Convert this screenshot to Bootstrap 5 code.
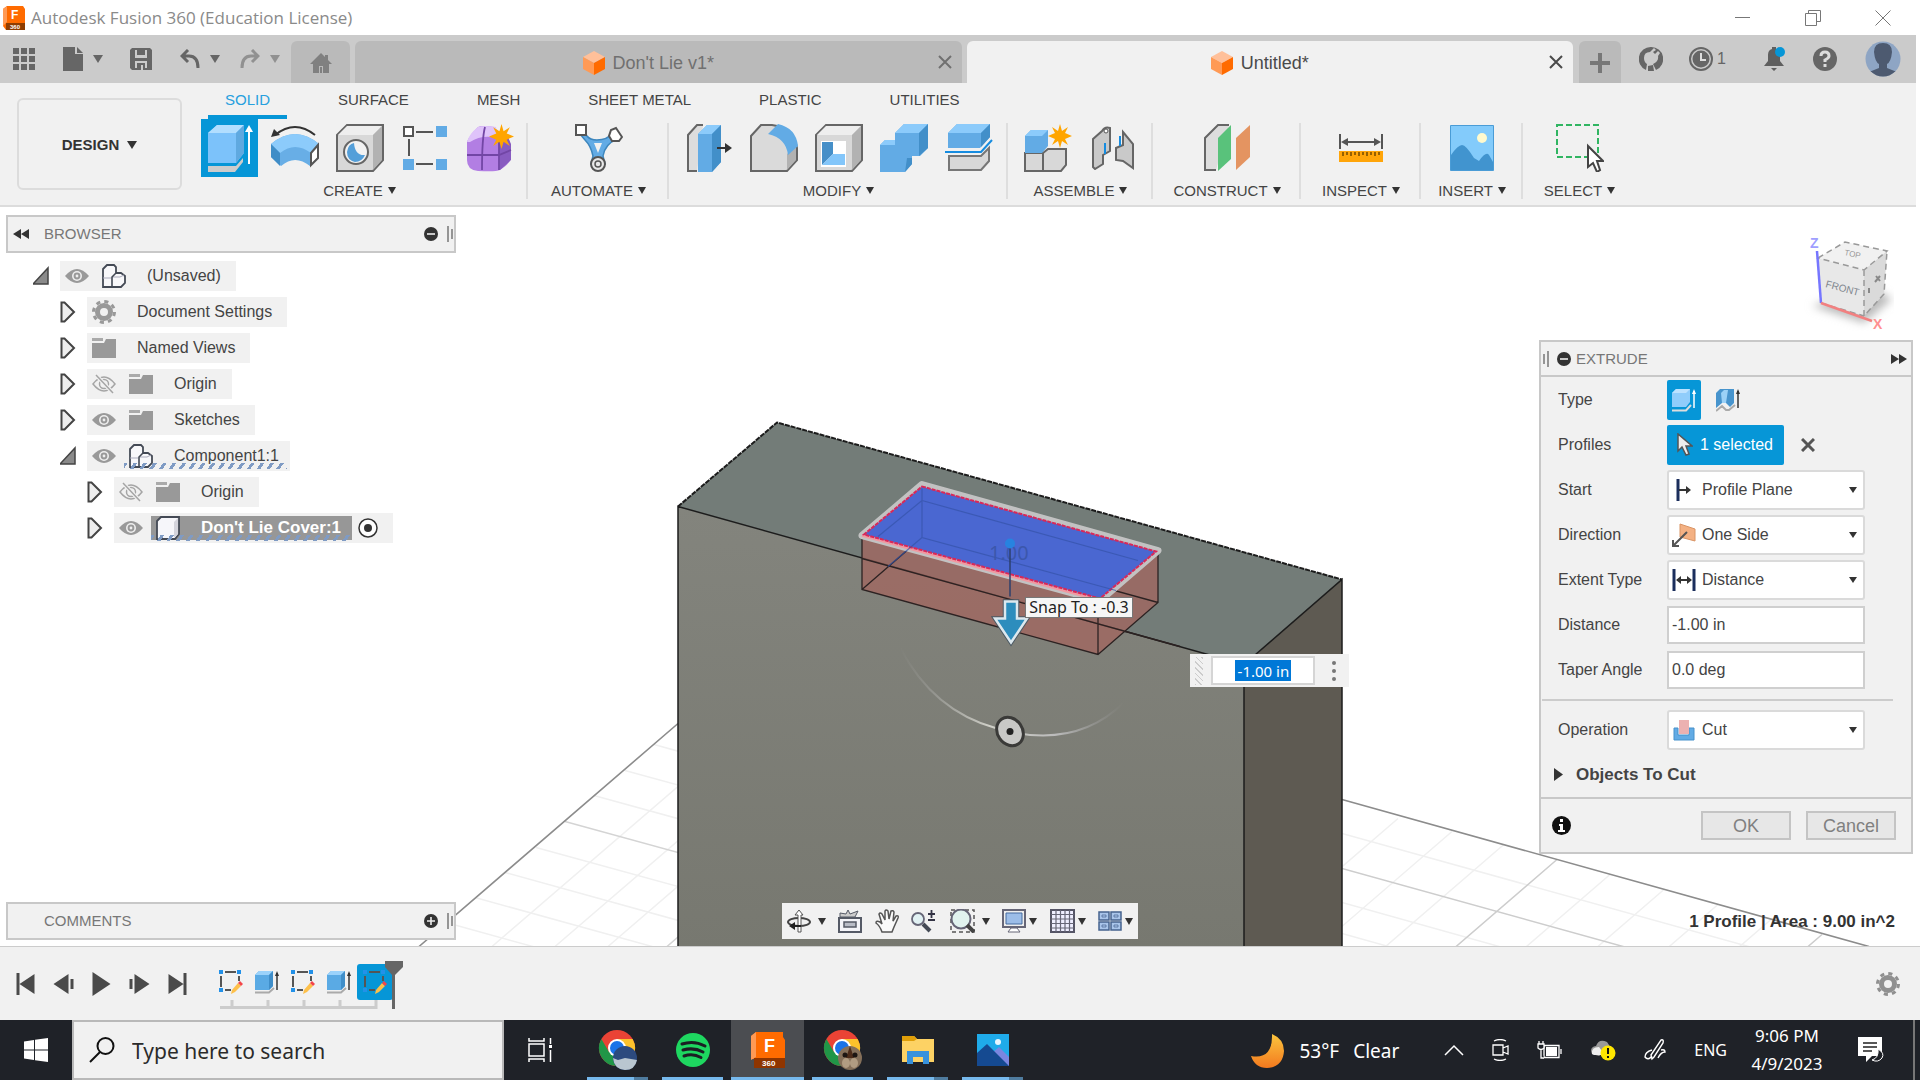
<!DOCTYPE html>
<html lang="en">
<head>
<meta charset="utf-8">
<meta name="viewport" content="width=device-width, initial-scale=1">
<title>Autodesk Fusion 360 (Education License)</title>
<link href="https://cdn.jsdelivr.net/npm/bootstrap@5.3.0/dist/css/bootstrap.min.css" rel="stylesheet">
<style>
  :root { --bar:#f1f1f1; --strip:#cbcbcb; --tabidle:#bababa; --accent:#0696d7; --ink:#444; --line:#c8c8c8; }
  html, body { height: 100%; }
  body { font-family: "Liberation Sans", Arial, sans-serif; font-size: 16px; line-height: 20px; color: var(--ink); background: #fff; overflow: hidden; }
  button { font: inherit; color: inherit; background: none; border: 0; padding: 0; }
  svg { display: block; flex: none; }
  .ui-face { font-family: "Noto Sans", sans-serif; }
  .caret { flex: none; width: 0; height: 0; border: 5px solid transparent; border-top: 8px solid currentColor; border-bottom: 0; }

  .titlebar { height: 35px; padding-left: 3px; color: #8a8a8a; }
  .titlebar .app-name { font-family: "Open Sans", sans-serif; font-size: 17px; margin-left: 6px; }
  .win-controls { gap: 54px; padding-right: 29px; }

  .tabstrip { height: 48px; background: var(--strip); color: #666; }
  .quick { width: 291px; }
  .quick button { height: 48px; gap: 10px; }
  .q-grid { width: 48px; padding-left: 13px; }
  .quick .q-file { width: 70px; padding-left: 15px; }
  .quick .q-save { width: 48px; padding-left: 12px; }
  .quick .q-undo { width: 62px; padding-left: 14px; }
  .quick .q-redo { width: 63px; padding-left: 12px; color: #919191; }
  .quick .q-grid { padding-left: 13px; }
  .doc-tab { height: 42px; background: var(--tabidle); border-radius: 6px 6px 0 0; font-size: 18px; color: #707070; padding-top: 2px; }
  .doc-tab.is-active { background: var(--bar); color: #4a4a4a; }
  .file-tab { padding-right: 20px; }
  .home-tab, .file-tab:not(.is-active) { margin-right: 5px; }
  .home-tab { width: 59px; }
  .add-tab { width: 42px; }
  .account { padding-left: 6px; width: 343px; }
  .doc-tab .close-x { position: absolute; right: 10px; top: 14px; }

  .ribbon { min-height: 123px; background: var(--bar); border-bottom: 2px solid #dcdcdc; }
  .workspace { width: 165px; height: 92px; margin: 15px 9px 0 17px; border: 2px solid #dcdcdc; border-radius: 6px; font-weight: 700; font-size: 15px; color: #333; padding-top: 2px; }
  .ribbon-tabs { height: 36px; font-size: 15px; }
  .ribbon-tabs a { padding: 7px 34px; color: var(--ink); text-decoration: none; position: relative; white-space: nowrap; }
  .ribbon-tabs a.is-active { color: #27a0de; }
  .ribbon-tabs a.is-active::after { content: ""; position: absolute; left: 17px; right: 17px; bottom: 0; height: 4px; background: var(--accent); }
  .tool-group { position: relative; color: #333; }
  .tool-group:not(:last-child)::after { content: ""; position: absolute; right: 0; top: 4px; bottom: 6px; width: 2px; background: #dedede; }
  .tools { height: 57px; gap: 8px; }
  .tools button { width: 57px; height: 58px; display: flex; align-items: center; justify-content: center; }
  .tools .is-on { background: var(--accent); }
  .group-label { height: 29px; font-size: 15px; gap: 5px; color: #444; }
  .group-label .caret { border-width: 7px 4px 0; color: #333; }
  .g-create { width: 337px; } .g-automate { width: 141px; } .g-modify { width: 339px; } .g-assemble { width: 145px; }
  .g-construct { width: 148px; } .g-inspect { width: 120px; } .g-insert { width: 102px; } .g-select { width: 113px; }

  .viewport { position: relative; background: #fff; overflow: hidden; }
  .scene { position: absolute; inset: 0; width: 100%; height: 100%; }
  .float { position: absolute; }
  .palette-head { width: 450px; height: 38px; border: 2px solid var(--line); background: var(--bar); color: #777; font-size: 15px; }
  .browser { left: 6px; top: 8px; }
  .comments { left: 6px; bottom: 6px; padding-left: 36px; }
  .tree { padding-top: 8px; }
  .tree-row { height: 30px; margin-bottom: 6px; }
  .tree-row > button { width: 17px; margin-right: 10px; }
  .chip { height: 30px; background: var(--bar); padding: 0 15px 0 5px; }
  .lv1 { padding-left: 27px; } .lv2 { padding-left: 54px; } .lv3 { padding-left: 81px; }
  .chip .eye { margin-right: 13px; }
  .chip .node { margin-right: 21px; }
  .hatch { position: relative; margin: 0 -12px 0 -5px; padding: 0 8px 0 5px; height: 24px; }
  .hatch::after { content: ""; position: absolute; left: 0; right: 0; bottom: -1px; height: 6px; background: repeating-linear-gradient(125deg, #7f9bc4 0 3px, transparent 3px 8px); }
  .hatch.is-selected { background: #979797; color: #fff; font-weight: 700; font-size: 17px; margin-right: 6px; padding-right: 11px; }

  .view-cube { right: 26px; top: 24px; }
  .snap { left: 1026px; left: 53.4%; top: 390px; border: 1px solid #777; background: #f6f6f6; color: #222; height: 21px; line-height: 19px; padding: 0 3px; font-size: 16px; white-space: nowrap; }
  .mini { left: 62%; top: 447px; height: 33px; width: 159px; background: var(--bar); padding-left: 5px; }
  .mini input { width: 104px; height: 29px; border: 2px solid #d5d5d5; padding: 2px 22px; border-radius: 0; font-family: "Noto Sans", sans-serif; font-size: 15px; line-height: 20px; color: #fff; background: linear-gradient(#0078d7,#0078d7) content-box, #fff; text-align: center; }
  .mini button { margin-left: 17px; }
  .grip { width: 8px; height: 28px; background: repeating-linear-gradient(45deg, #ccc 0 1px, transparent 1px 4px); margin-right: 8px; }

  .extrude { right: 7px; top: 133px; width: 374px; background: var(--bar); border: 2px solid var(--line); }
  .extrude header { height: 35px; border-bottom: 2px solid var(--line); color: #777; padding: 0 4px 0 2px; font-size: 15px; }
  .extrude header .minus { margin: 0 5px 0 8px; }
  .field-row { height: 45px; padding-left: 17px; }
  .field-row > label, .field-row > .field-name { width: 109px; }
  .pick { position: relative; width: 198px; }
  .pick svg { position: absolute; left: 5px; top: 8px; pointer-events: none; }
  .pick::after { content: ""; position: absolute; right: 8px; top: 17px; border: 4px solid transparent; border-top: 6px solid #333; border-bottom: 0; pointer-events: none; }
  .pick select { appearance: none; width: 100%; height: 40px; border: 2px solid #dadada; border-radius: 3px; background: #fff; color: var(--ink); padding: 0 24px 0 33px; }
  .field-row .form-control { width: 198px; height: 38px; border: 2px solid #cfcfcf; border-radius: 0; background: #fff; color: var(--ink); padding: 0 3px; font-size: 16px; }
  .on-btn { background: var(--accent); color: #fff; border-radius: 2px; height: 40px; }
  .type-btn { width: 34px; margin-right: 15px; }
  .sel-btn { width: 117px; padding-left: 10px; gap: 7px; }
  .clear-btn { margin-left: 17px; color: #555; }
  .rule { height: 2px; background: #ccc; margin: 7px 18px 6px 1px; }
  .objects-row { padding-left: 13px; gap: 13px; font-weight: 700; font-size: 17px; }
  .extrude footer { border-top: 2px solid var(--line); height: 55px; padding: 0 15px 0 11px; }
  .dlg-btn { width: 90px; height: 29px; border: 2px solid #c4c4c4; background: #e7e7e7; color: #808080; font-size: 18px; line-height: 22px; }
  .status { right: 25px; bottom: 14px; font-weight: 700; font-size: 17px; color: #333; }

  .navbar-strip { left: 50%; transform: translateX(-50%); bottom: 7px; width: 356px; height: 36px; background: var(--bar); padding: 0 5px; color: #333; gap: 6px; justify-content: space-between; }
  .navbar-strip button { display: flex; align-items: center; gap: 3px; }
  .navbar-strip .wide { gap: 7px; }
  .navbar-strip .caret { border-width: 7px 4px 0; }

  .timeline { height: 74px; background: var(--bar); border-top: 1px solid #ccc; color: #4a4a4a; }
  .playback { gap: 15px; margin-left: 14px; width: 199px; }
  .features { position: relative; padding-top: 17px; }
  .features button { width: 36px; height: 36px; display: flex; align-items: center; justify-content: center; }
  .features .is-on { background: var(--accent); border-radius: 3px; }
  .marker { position: absolute; left: 171px; top: 14px; }
  .gear-btn { margin-right: 20px; color: #909090; }

  .taskbar { height: 60px; background: #1f2228; color: #fff; }
  .start { width: 72px; }
  .search { width: 432px; height: 60px; background: #f1f1f1; border: 2px solid #b9b9b9; padding-left: 15px; color: #222; }
  .search input { border: 0; background: none; font-family: "Noto Sans", sans-serif; font-size: 21px; line-height: 30px; outline: 0; width: 330px; padding: 2px 0 0; margin-left: 17px; }
  .search input::placeholder { color: #2b2b2b; opacity: 1; }
  .apps button { width: 75px; height: 60px; display: flex; align-items: center; justify-content: center; position: relative; }
  .apps .running::after { content: ""; position: absolute; left: 7px; right: 7px; bottom: 0; height: 3px; background: #76b9ed; }
  .apps .many::after { background: linear-gradient(90deg, #76b9ed 47px, #4f7c9f 47px); }
  .apps .is-front::before { content: ""; position: absolute; inset: 0 1px; background: #4b4d51; }
  .apps .is-front::after { left: 1px; right: 1px; }
  .apps svg { position: relative; }
  .apps .task-view { width: 72px; margin-right: 4px; }
  .weather { font-size: 19px; gap: 14px; padding-top: 2px; margin-right: 45px; }
  .tray { gap: 28px; }
  .clock { line-height: 28px; font-size: 17px; width: 84px; margin-left: 18px; }
  .action { margin: 0 29px; }
  .peek { width: 7px; height: 60px; border-left: 2px solid #777; }
</style>
</head>
<body class="d-flex flex-column">

<svg width="0" height="0" class="position-absolute" aria-hidden="true">
  <defs>
    <symbol id="eye" viewBox="0 0 24 24"><path d="M0 12Q12-2 24 12Q12 26 0 12Z" fill="#999"/><circle cx="12" cy="12" r="5" fill="#eee"/><circle cx="12" cy="12" r="3.4" fill="#999"/><circle cx="12" cy="12" r="1.4" fill="#eee"/></symbol>
    <symbol id="eye-off" viewBox="0 0 24 24"><g fill="none" stroke="#a5a5a5" stroke-width="1.5"><path d="M1 12Q12-2 23 12Q12 26 1 12Z"/><circle cx="12" cy="12" r="4.5"/><path d="M4 3L21 21" stroke="#f1f1f1" stroke-width="4"/><path d="M4 3L21 21"/></g></symbol>
    <symbol id="folder" viewBox="0 0 24 24"><path d="M0 7H12L14 3H24V22H0Z" fill="#999"/><path d="M0 2H11V5H0Z" fill="#aaa"/></symbol>
    <symbol id="tri-closed" viewBox="0 0 17 22"><path d="M1.5 1.5H4.500L14 11L4.500 20.500H1.500Z" fill="#eee" stroke="#444" stroke-width="2"/></symbol>
    <symbol id="tri-open" viewBox="0 0 17 22"><path d="M15 3V19H0Z" fill="#8a8a8a" stroke="#444" stroke-width="1.500"/></symbol>
    <symbol id="component" viewBox="0 0 24 24"><path d="M1 5L5 1H12L14 3V9H19L23 12V19L19 23H1Z" fill="#f8f8fa" stroke="#444a55" stroke-width="1.800"/><path d="M1 14H9M10 13H18L22 11" stroke="#aab" fill="none"/><path d="M10 23V13L14 9" stroke="#444a55" stroke-width="1.600" fill="none"/></symbol>
    <symbol id="orange-cube" viewBox="0 0 22 24"><path d="M11 0L22 6L11 12L0 6Z" fill="#ffc09a"/><path d="M0 6L11 12V24L0 18Z" fill="#ff9a55"/><path d="M22 6L11 12V24L22 18Z" fill="#ff6b00"/></symbol>
    <symbol id="x" viewBox="0 0 14 14"><path d="M1 1L13 13M13 1L1 13" stroke="currentColor" stroke-width="2" fill="none"/></symbol>
    <symbol id="minus-dot" viewBox="0 0 14 14"><circle cx="7" cy="7" r="7" fill="#333"/><path d="M3 7H11" stroke="#eee" stroke-width="1.600"/></symbol>
    <symbol id="extrude-s" viewBox="0 0 24 24"><path d="M0 5L4 1H18V16L14 20H0Z" fill="#5aaae4"/><path d="M0 5L4 1H18L14 5Z" fill="#9ad2fb"/><path d="M14 5L18 1V16L14 20Z" fill="#3f8ec9"/><path d="M0 22.500H14L19 18" fill="none" stroke="#aaa" stroke-width="2"/><path d="M22 20V3" stroke="#333" stroke-width="1.500"/><path d="M20 6L22 1L24 6Z" fill="#333"/></symbol>
    <symbol id="sketch-s" viewBox="0 0 24 24"><path d="M6 2H17M2 6V17M20 6V11M6 20H12" stroke="#555" stroke-width="2" fill="none"/><path d="M0 0h4v4H0zM18 0h4v4h-4zM0 18h4v4H0z" fill="#2391e8"/><path d="M13 20L19 13L22 16L16 22L12 24Z" fill="#fdc04a"/><path d="M19 13L21 11L24 14L22 16Z" fill="#f3454a"/></symbol>
    <symbol id="star" viewBox="0 0 24 24"><path d="M12 0L14 7L20 3L17 9L24 12L17 15L20 21L14 17L12 24L10 17L4 21L7 15L0 12L7 9L4 3L10 7Z" fill="#ffa500"/></symbol>
    <symbol id="gear" viewBox="0 0 24 24"><g fill="none" stroke="currentColor"><circle cx="12" cy="12" r="6.500" stroke-width="5"/><circle cx="12" cy="12" r="10.500" stroke-width="3" stroke-dasharray="4.120 4.120"/></g></symbol>
    <symbol id="chrome" viewBox="0 0 40 40"><circle cx="19" cy="18" r="18" fill="#ea4335"/><path d="M3.400 9A18 18 0 0 0 19 36L27 22.500L11 22Z" fill="#209647"/><path d="M19 9H34.600A18 18 0 0 1 19 36L27 22Z" fill="#fcc22c"/><circle cx="19" cy="18" r="9" fill="#fff"/><circle cx="19" cy="18" r="7" fill="#1a73e8"/></symbol>
    <symbol id="play-step" viewBox="0 0 22 24"><path d="M1 7H4V17H1ZM6 2L21 12L6 22Z" fill="currentColor"/></symbol>
    <symbol id="skip-end" viewBox="0 0 22 24"><path d="M2 2L17 12L2 22ZM17 1H20V23H17Z" fill="currentColor"/></symbol>
  </defs>
</svg>

<header class="titlebar d-flex align-items-center">
  <svg width="22" height="24" viewBox="0 0 22 24"><path d="M0 3L4 0H20L22 3V24H3L0 20Z" fill="#ff6b00"/><path d="M0 3L4 0V16L0 20Z" fill="#ff9a55"/><path d="M3 17H22V24H3Z" fill="#8f3d00"/><text x="8" y="13" font-size="12" font-weight="700" fill="#fff">F</text><text x="7" y="23" font-size="6" font-weight="700" fill="#fff">360</text></svg>
  <span class="app-name flex-grow-1">Autodesk Fusion 360 (Education License)</span>
  <div class="win-controls d-flex align-items-center">
    <button aria-label="Minimize"><svg width="16" height="16" viewBox="0 0 16 16"><path d="M0 7.500H15" stroke="#777"/></svg></button>
    <button aria-label="Restore"><svg width="16" height="16" viewBox="0 0 16 16" fill="none" stroke="#777"><path d="M.5 3.500H11.500V15.500H.5ZM3.500 3.500V.5H15.500V11.500H11.500"/></svg></button>
    <button aria-label="Close"><svg width="16" height="16" viewBox="0 0 16 16"><path d="M.5.5L15.500 15.500M15.500.5L.5 15.500" stroke="#777"/></svg></button>
  </div>
</header>

<nav class="tabstrip d-flex align-items-end me-1" aria-label="Documents">
  <div class="quick d-flex">
    <button class="q-grid d-flex align-items-center" aria-label="Data panel"><svg width="22" height="22" viewBox="0 0 22 22" fill="currentColor"><path d="M0 0h6v6H0zM8 0h6v6H8zM16 0h6v6h-6zM0 8h6v6H0zM8 8h6v6H8zM16 8h6v6h-6zM0 16h6v6H0zM8 16h6v6H8zM16 16h6v6h-6z"/></svg></button>
    <button class="q-file d-flex align-items-center" aria-label="File"><svg width="20" height="24" viewBox="0 0 20 24" fill="currentColor"><path d="M0 0H12V7H20V24H0Z"/><path d="M14 0L20 6H14Z"/></svg><i class="caret"></i></button>
    <button class="q-save d-flex align-items-center" aria-label="Save"><svg width="22" height="22" viewBox="0 0 22 22"><path d="M2 0H20L22 2V22H2L0 20V2Z" fill="currentColor"/><path d="M5 2H17V10H5Z" fill="#cbcbcb"/><path d="M7 0H15V7H7Z" fill="currentColor"/><path d="M5 13H17V20H5Z" fill="#cbcbcb"/><path d="M7 15H15V22H7Z" fill="currentColor"/><path d="M11 17h2v5h-2z" fill="#cbcbcb"/></svg></button>
    <button class="q-undo d-flex align-items-center" aria-label="Undo"><svg width="20" height="20" viewBox="0 0 20 20" fill="none" stroke="currentColor" stroke-width="3"><path d="M8 1L2 7L8 13M2 7H9Q18 7 18 19"/></svg><i class="caret"></i></button>
    <button class="q-redo d-flex align-items-center" aria-label="Redo"><svg width="20" height="20" viewBox="0 0 20 20" fill="none" stroke="currentColor" stroke-width="3"><path d="M12 1L18 7L12 13M18 7H11Q2 7 2 19"/></svg><i class="caret"></i></button>
  </div>
  <button class="doc-tab home-tab d-flex align-items-center justify-content-center" aria-label="Home"><svg width="22" height="20" viewBox="0 0 22 20" fill="#808080"><path d="M11 0L15 4V2H18V7L22 11H19V20H13V13H9V20H3V11H0Z"/><path d="M10 14h2v6h-2z"/></svg></button>
  <button class="doc-tab file-tab position-relative d-flex align-items-center justify-content-center flex-grow-1 w-25"><svg width="22" height="24" class="me-2"><use href="#orange-cube"/></svg>Don't Lie v1*<svg class="close-x" width="14" height="14"><use href="#x"/></svg></button>
  <button class="doc-tab file-tab is-active position-relative d-flex align-items-center justify-content-center flex-grow-1 w-25"><svg width="22" height="24" class="me-2"><use href="#orange-cube"/></svg>Untitled*<svg class="close-x" width="14" height="14"><use href="#x"/></svg></button>
  <div class="account d-flex align-items-end flex-shrink-0">
    <button class="doc-tab add-tab d-flex align-items-center justify-content-center" aria-label="New tab"><svg width="20" height="20" viewBox="0 0 20 20"><path d="M10 0V20M0 10H20" stroke="#777" stroke-width="4"/></svg></button>
    <div class="d-flex align-items-center" style="height:48px;padding-left:18px">
      <button aria-label="Extensions"><svg width="24" height="24" viewBox="0 0 24 24"><path d="M12 0A12 12 0 0 1 17 23L14 17Q20 14 19 9L21 6L19 4L16 7L14 5L17 3L15 1L11 5Q5 5 5 11Q5 15 8 17L7 23A12 12 0 0 1 12 0Z" fill="#666"/><path d="M9 19L14 18L15 24H9Z" fill="#666"/></svg></button>
      <button class="d-flex align-items-center gap-1" style="margin-left:26px"><svg width="24" height="24" viewBox="0 0 24 24"><circle cx="12" cy="12" r="11" fill="none" stroke="#666" stroke-width="2"/><circle cx="12" cy="12" r="8.500" fill="#666"/><path d="M12 6V13H17" stroke="#ddd" stroke-width="2" fill="none"/></svg>1</button>
      <button style="margin-left:37px" aria-label="Notifications"><svg width="24" height="26" viewBox="0 0 24 26"><path d="M1 20L5 15V9Q5 4 9 3V1H13V3Q17 4 17 9V15L21 20ZM8 22H14L11 25Z" fill="#5f5f5f"/><circle cx="17" cy="6" r="5" fill="#0696d7"/></svg></button>
      <button style="margin-left:26px" aria-label="Help"><svg width="24" height="24" viewBox="0 0 24 24"><circle cx="12" cy="12" r="12" fill="#666"/><path d="M8 9Q8 5 12 5Q16 5 16 9Q16 11 12 13V15" stroke="#ddd" stroke-width="3" fill="none"/><path d="M10.500 17h3v3h-3z" fill="#ddd"/></svg></button>
      <button style="margin-left:28px" aria-label="Profile"><svg width="36" height="36" viewBox="0 0 36 36"><defs><clipPath id="av"><circle cx="18" cy="18" r="17.500"/></clipPath></defs><g clip-path="url(#av)"><path d="M0 0H36V36H0Z" fill="#8ea5c4"/><path d="M18 2Q27 2 27 11Q26 21 22 23V27L32 31L36 36H0L4 31L14 27V23Q10 21 9 11Q9 2 18 2Z" fill="#4d5a70"/></g></svg></button>
    </div>
  </div>
</nav>

<section class="ribbon d-flex me-1">
  <button class="workspace d-flex align-items-center justify-content-center gap-2 flex-shrink-0">DESIGN<i class="caret"></i></button>
  <div>
    <nav class="ribbon-tabs d-flex" aria-label="Workspace tabs">
      <a href="#" class="is-active">SOLID</a><a href="#">SURFACE</a><a href="#">MESH</a><a href="#">SHEET METAL</a><a href="#">PLASTIC</a><a href="#">UTILITIES</a>
    </nav>
    <div class="d-flex">
      <div class="tool-group g-create">
        <div class="tools d-flex justify-content-center">
          <button class="is-on" aria-label="Extrude"><svg width="48" height="48" viewBox="0 0 48 48"><path d="M2 9L11 1H38V29L30 39H2Z" fill="#7cc2fa"/><path d="M2 9L11 1H38L30 9Z" fill="#b1deff"/><path d="M30 9L38 1V29L30 39Z" fill="#5fa9e0"/><path d="M2 42H30L37 34V38L29 48H2Z" fill="#ccc"/><path d="M43 40V5" stroke="#fff" stroke-width="2"/><path d="M39 8L43 1L47 8Z" fill="#fff"/></svg></button>
          <button aria-label="Revolve"><svg width="48" height="48" viewBox="0 0 48 48"><path d="M0 20Q24 0 48 20L40 29L39 42Q24 30 10 42L0 33Z" fill="#68aee6"/><path d="M0 20Q24 0 48 20L40 29Q24 17 9 29Z" fill="#8ccbfb"/><path d="M0 20L9 29V42L0 33Z" fill="#3f8dc7"/><path d="M40 29L47 21V34L40 41Z" fill="#fff" stroke="#555" stroke-width="2"/><path d="M4 11Q24-5 44 11" fill="none" stroke="#333" stroke-width="2"/><path d="M0 13L3 5L9 11Z" fill="#333"/></svg></button>
          <button aria-label="Hole"><svg width="48" height="48" viewBox="0 0 48 48"><path d="M1 11L11 1H47V36L37 47H1Z" fill="#d8d8d8" stroke="#666" stroke-width="2"/><path d="M2 11L11 2H46L37 11Z" fill="#eee"/><path d="M37 11L46 2V36L37 46Z" fill="#b2b2b2"/><circle cx="20" cy="28" r="12" fill="#f2f2f2" stroke="#666" stroke-width="2"/><path d="M18 19Q19 32 29 31Q26 38 19 38Q11 36 11 28Q12 20 18 19Z" fill="#549fd9"/></svg></button>
          <button aria-label="Pattern"><svg width="44" height="44" viewBox="0 0 44 44"><path d="M13 6H30M6 13V30M13 38H30" stroke="#555" stroke-width="2"/><path d="M1 1H10V10H1Z" fill="#fff" stroke="#555" stroke-width="2"/><path d="M33 0h11v11H33zM0 33h11v11H0zM33 33h11v11H33z" fill="#62abe5"/></svg></button>
          <button aria-label="Create form"><svg width="48" height="48" viewBox="0 0 48 48"><path d="M1 18Q3 12 12 3Q16 1 28 3L44 20V36Q43 40 34 46Q30 48 12 47Q1 46 1 36Z" fill="#b27ee3"/><path d="M1 18Q3 10 12 3Q18 1 30 3L32 14Q16 10 4 18Z" fill="#dfc3fa"/><path d="M33 14Q40 6 45 20V36L34 46Z" fill="#885bc0"/><path d="M19 3Q16 14 16 46M1 31H33L45 26M33 14V46" stroke="#7246a5" stroke-width="1.800" fill="none"/><use href="#star" x="23" y="0" width="25" height="25"/></svg></button>
        </div>
        <div class="group-label d-flex align-items-center justify-content-center">CREATE<i class="caret"></i></div>
      </div>
      <div class="tool-group g-automate">
        <div class="tools d-flex justify-content-center"><button aria-label="Automate"><svg width="48" height="48" viewBox="0 0 48 48"><path d="M8 6L12 12Q15 16 22 16Q32 16 38 9L42 15Q30 20 28 32L30 40H16L18 32Q16 22 10 16L5 10Z" fill="#62abe5" stroke="#3d86bd" stroke-width="1.500"/><path d="M19 19H27L23 29Z" fill="#f1f1f1"/><path d="M1 1H11V11H1Z" fill="#fff" stroke="#555" stroke-width="2"/><path d="M41 4L47 13L44 17L37 17L34 12L36 6Z" fill="#fff" stroke="#555" stroke-width="2"/><circle cx="23" cy="40" r="7" fill="#e8e8e8" stroke="#555" stroke-width="2"/><circle cx="23" cy="40" r="3" fill="none" stroke="#555" stroke-width="1.500"/></svg></button></div>
        <div class="group-label d-flex align-items-center justify-content-center">AUTOMATE<i class="caret"></i></div>
      </div>
      <div class="tool-group g-modify">
        <div class="tools d-flex justify-content-center">
          <button aria-label="Press pull"><svg width="48" height="48" viewBox="0 0 48 48"><path d="M12 47H3V11L12 1H18" fill="#ddd" stroke="#666" stroke-width="2"/><path d="M13 10L22 1H36V38L27 48H13Z" fill="#62abe5"/><path d="M13 10L22 1H36L27 10Z" fill="#8ccbfb"/><path d="M27 10L36 1V38L27 48Z" fill="#428fc9"/><path d="M32 24H42" stroke="#333" stroke-width="2"/><path d="M40 19L47 24L40 29Z" fill="#333"/></svg></button>
          <button aria-label="Fillet"><svg width="48" height="48" viewBox="0 0 48 48"><path d="M1 47V12L11 1H22Q44 4 47 24V36L37 47Z" fill="#dadada" stroke="#666" stroke-width="2"/><path d="M37 30L46 22V36L37 46Z" fill="#b2b2b2"/><path d="M18 10L28 0Q46 4 48 22L38 31Q36 14 18 10Z" fill="#62abe5"/></svg></button>
          <button aria-label="Shell"><svg width="48" height="48" viewBox="0 0 48 48"><path d="M1 11L11 1H47V36L37 47H1Z" fill="#d8d8d8" stroke="#666" stroke-width="2"/><path d="M2 11L11 2H46L37 11Z" fill="#eee"/><path d="M37 11L46 2V36L37 46Z" fill="#b2b2b2"/><path d="M6 17H31V43H6Z" fill="#fff"/><path d="M7 18H18V30L7 41Z" fill="#468fc8"/><path d="M18 30H30V41H7Z" fill="#83c6fa"/></svg></button>
          <button aria-label="Combine"><svg width="48" height="48" viewBox="0 0 48 48"><path d="M0 21L5 16H15V9L24 0H48V24L40 32H32V40L25 48H0Z" fill="#62abe5"/><path d="M15 9L24 0H48L39 9ZM0 21L5 16H15V21Z" fill="#8ccbfb"/><path d="M39 9L48 0V24L39 32ZM27 34H32V40L25 48Z" fill="#428fc9"/></svg></button>
          <button aria-label="Split body"><svg width="48" height="48" viewBox="0 0 48 48"><path d="M3 9L12 0H45V13L35 24H3Z" fill="#62abe5"/><path d="M3 9L12 0H45L36 9Z" fill="#8ccbfb"/><path d="M36 9L45 0V13L36 23Z" fill="#428fc9"/><path d="M0 28H36L47 16" stroke="#168ce0" stroke-width="2" fill="none"/><path d="M4 32H36L44 24V37L36 46H4Z" fill="#d8d8d8" stroke="#777" stroke-width="2"/></svg></button>
        </div>
        <div class="group-label d-flex align-items-center justify-content-center">MODIFY<i class="caret"></i></div>
      </div>
      <div class="tool-group g-assemble">
        <div class="tools d-flex justify-content-center">
          <button aria-label="New component"><svg width="48" height="48" viewBox="0 0 48 48"><path d="M1 29H19V47H1ZM19 29L24 25H42V41L37 47H19Z" fill="#d8d8d8" stroke="#666" stroke-width="2"/><path d="M1 12L7 6H24V22L18 29H1Z" fill="#62abe5"/><path d="M1 12L7 6H24L18 12Z" fill="#8ccbfb"/><use href="#star" x="24" y="0" width="24" height="24"/></svg></button>
          <button aria-label="Joint"><svg width="44" height="44" viewBox="0 0 44 44"><g fill="#c9c9c9" stroke="#666" stroke-width="2"><path d="M2 13L11 5Q14 0 19 2V25L12 29V38L4 43L2 41Z"/><path d="M32 6L42 18V42L32 35L25 34V22L32 19Z"/></g><circle cx="15" cy="5" r="2" fill="#fff" stroke="#555"/><path d="M14 17V28M29 10V20" stroke="#168ce0" stroke-width="2"/></svg></button>
        </div>
        <div class="group-label d-flex align-items-center justify-content-center">ASSEMBLE<i class="caret"></i></div>
      </div>
      <div class="tool-group g-construct">
        <div class="tools d-flex justify-content-center"><button aria-label="Offset plane"><svg width="48" height="48" viewBox="0 0 48 48"><path d="M13 46H2V14L15 1H26" fill="#ddd" stroke="#666" stroke-width="2"/><path d="M15 14L28 1V35L15 47Z" fill="#59c27b"/><path d="M33 14L47 1V33L33 46Z" fill="#e49461"/></svg></button></div>
        <div class="group-label d-flex align-items-center justify-content-center">CONSTRUCT<i class="caret"></i></div>
      </div>
      <div class="tool-group g-inspect">
        <div class="tools d-flex justify-content-center"><button aria-label="Measure"><svg width="44" height="28" viewBox="0 0 44 28"><path d="M1 0V15M43 0V15M4 8H40" stroke="#555" stroke-width="2"/><path d="M2 8L9 4V12ZM42 8L35 4V12Z" fill="#555"/><path d="M0 17H44V28H0Z" fill="#ffa50a"/><path d="M4 18v4M8 18v3M12 18v4M16 18v3M20 18v4M24 18v3M28 18v4M32 18v3M36 18v4M40 18v3" stroke="#734a00" stroke-width="1.500"/></svg></button></div>
        <div class="group-label d-flex align-items-center justify-content-center">INSPECT<i class="caret"></i></div>
      </div>
      <div class="tool-group g-insert">
        <div class="tools d-flex justify-content-center"><button aria-label="Insert"><svg width="44" height="46" viewBox="0 0 44 46"><path d="M.5.5H43.500V45.500H.5Z" fill="#83cbfb" stroke="#4a9cd6"/><path d="M1 30Q8 20 12 20Q16 20 24 33L29 36Q36 26 39 30L43 37V45H1Z" fill="#4194cf"/><circle cx="32" cy="13" r="5" fill="#ffface"/></svg></button></div>
        <div class="group-label d-flex align-items-center justify-content-center">INSERT<i class="caret"></i></div>
      </div>
      <div class="tool-group g-select">
        <div class="tools d-flex justify-content-center"><button aria-label="Select"><svg width="48" height="48" viewBox="0 0 48 48"><path d="M1 1H42V33H1Z" fill="none" stroke="#30b562" stroke-width="2" stroke-dasharray="6 3"/><path d="M32 22V43L37 39L41 48L44 46L41 37H47Z" fill="#fff" stroke="#444" stroke-width="2"/></svg></button></div>
        <div class="group-label d-flex align-items-center justify-content-center">SELECT<i class="caret"></i></div>
      </div>
    </div>
  </div>
</section>

<main class="viewport flex-grow-1">
  <svg class="scene" viewBox="0 206 1920 740" preserveAspectRatio="xMidYMid slice" aria-hidden="true">
    <defs>
      <linearGradient id="front" x2="0" y2="1"><stop stop-color="#83847d"/><stop offset="1" stop-color="#777870"/></linearGradient>
      <clipPath id="gl"><path d="M678 723V946H419Z"/></clipPath>
      <clipPath id="gr"><path d="M1342 799V946H1869Z"/></clipPath>
      <linearGradient id="arc"><stop stop-color="#aaa" stop-opacity="0"/><stop offset=".4" stop-color="#d0d0c8"/><stop offset=".7" stop-color="#bbb"/><stop offset="1" stop-color="#999" stop-opacity="0"/></linearGradient>
    </defs>
    <g clip-path="url(#gl)" fill="none" stroke="#f0f0f0" stroke-width="1.500">
      <path d="M654 744l200 55M625 770l200 55M594 795l200 55M536 847l200 55M505 872l300 83M475 897l300 83M446 922l300 83"/>
      <path d="M492 946l300-258M555 946l300-258M608 946l300-258"/>
      <path d="M565 821l200 55M667 946l80-69" stroke="#d4d4d4"/>
    </g>
    <g clip-path="url(#gr)" fill="none" stroke="#f0f0f0" stroke-width="1.500">
      <path d="M1342 833l500 139M1342 902l300 84M1342 933l300 84"/>
      <path d="M1398 818l-160 138M1452 831l-160 138M1505 843l-160 138M1610 874l-160 138M1664 889l-160 138M1718 904l-160 138M1771 919l-160 138"/>
      <path d="M1342 868l400 111M1557 859l-160 138M1822 934l-80 69" stroke="#cdcdcd"/>
    </g>
    <path d="M678 723L419 946M1342 799L1869 946" stroke="#8c8c8c" stroke-width="1.600" fill="none"/>
    <path d="M678 506L1244 664V950H678Z" fill="url(#front)"/>
    <path d="M678 506L777 422L1342 579L1244 664Z" fill="#737c78"/>
    <path d="M1244 664L1342 579V950H1244Z" fill="#5e5a52"/>
    <path d="M678 950V506L1244 664V950M1244 664L1342 579V950" fill="none" stroke="#1c1c1c" stroke-width="1.500"/>
    <path d="M678 506L777 422L1342 579" fill="none" stroke="#1c1c1c" stroke-width="2" stroke-dasharray="5 1"/>
    <path d="M862 536L1098 602L1158 551V602L1098 654L862 589Z" fill="#a3665f" fill-opacity=".75"/>
    <path d="M862 536V589L1098 654L1158 602V551M1098 602V654M862 558L1180 646M862 589L922 537L1158 602" fill="none" stroke="#2c2222" stroke-width="1.300"/>
    <path d="M922 484L1158 550L1100 600L862 535Z" fill="#4a67d1" stroke="#c2c2c2" stroke-width="7" stroke-linejoin="round"/>
    <path d="M862 535L1100 600" stroke="#f09aa2" stroke-width="2.500"/>
    <path d="M922 486L1156 551L1100 598L864 534Z" fill="#4a67d1" stroke="#d92858" stroke-width="2" stroke-dasharray="4 1"/>
    <path d="M922 488V537L1116 590M922 537L888 566M922 500L1138 560M922 500L878 536" stroke="#3552a8" stroke-opacity=".7" fill="none" stroke-width="1.200"/>
    <text x="989" y="559" font-size="20" font-family="Noto Sans" fill="#3c57ac">1.00</text>
    <circle cx="1010" cy="543" r="5" fill="#2783e0"/>
    <path d="M1010 548V596" stroke="#2d3f6c" stroke-width="1.500"/>
    <path d="M1005 601H1017V618H1027L1011 642L995 618H1005Z" fill="#2d8dbd" stroke="#4b5964" stroke-width="4.500"/>
    <path d="M1005 601H1017V618H1027L1011 642L995 618H1005Z" fill="#2d8dbd" stroke="#dce8ee" stroke-width="2.500"/>
    <path d="M900 647C925 695 960 718 997 728Q1075 750 1124 702" fill="none" stroke="url(#arc)" stroke-width="2"/>
    <ellipse cx="1010" cy="731" rx="12.500" ry="15" transform="rotate(-35 1010 731)" fill="#c8c8c6" stroke="#3a3a38" stroke-width="3"/>
    <circle cx="1010" cy="731" r="3.500" fill="#222"/>
  </svg>

  <section class="float browser" aria-label="Browser">
    <div class="palette-head d-flex align-items-center" style="padding-left:5px">
      <svg width="17" height="10" viewBox="0 0 17 10" fill="#333"><path d="M8 0V10L0 5ZM16 0V10L8 5Z"/></svg>
      <span class="flex-grow-1" style="margin-left:14px">BROWSER</span>
      <svg width="14" height="14" class="me-2"><use href="#minus-dot"/></svg>
      <svg width="8" height="16" viewBox="0 0 8 16"><path d="M2 0V16M6 3V13" stroke="#777" stroke-width="1.500"/></svg>
    </div>
    <div class="tree">
      <div class="tree-row lv1 d-flex align-items-center"><button aria-label="Collapse"><svg width="17" height="22"><use href="#tri-open"/></svg></button><div class="chip d-flex align-items-center"><svg class="eye" width="24" height="24"><use href="#eye"/></svg><svg class="node" width="24" height="24"><use href="#component"/></svg>(Unsaved)</div></div>
      <div class="tree-row lv2 d-flex align-items-center"><button aria-label="Expand"><svg width="17" height="22"><use href="#tri-closed"/></svg></button><div class="chip d-flex align-items-center"><svg class="node" width="24" height="24" color="#999"><use href="#gear"/></svg>Document Settings</div></div>
      <div class="tree-row lv2 d-flex align-items-center"><button aria-label="Expand"><svg width="17" height="22"><use href="#tri-closed"/></svg></button><div class="chip d-flex align-items-center"><svg class="node" width="24" height="24"><use href="#folder"/></svg>Named Views</div></div>
      <div class="tree-row lv2 d-flex align-items-center"><button aria-label="Expand"><svg width="17" height="22"><use href="#tri-closed"/></svg></button><div class="chip d-flex align-items-center"><svg class="eye" width="24" height="24"><use href="#eye-off"/></svg><svg class="node" width="24" height="24"><use href="#folder"/></svg>Origin</div></div>
      <div class="tree-row lv2 d-flex align-items-center"><button aria-label="Expand"><svg width="17" height="22"><use href="#tri-closed"/></svg></button><div class="chip d-flex align-items-center"><svg class="eye" width="24" height="24"><use href="#eye"/></svg><svg class="node" width="24" height="24"><use href="#folder"/></svg>Sketches</div></div>
      <div class="tree-row lv2 d-flex align-items-center"><button aria-label="Collapse"><svg width="17" height="22"><use href="#tri-open"/></svg></button><div class="chip d-flex align-items-center"><svg class="eye" width="24" height="24"><use href="#eye"/></svg><div class="hatch d-flex align-items-center"><svg class="node" width="24" height="24"><use href="#component"/></svg>Component1:1</div></div></div>
      <div class="tree-row lv3 d-flex align-items-center"><button aria-label="Expand"><svg width="17" height="22"><use href="#tri-closed"/></svg></button><div class="chip d-flex align-items-center"><svg class="eye" width="24" height="24"><use href="#eye-off"/></svg><svg class="node" width="24" height="24"><use href="#folder"/></svg>Origin</div></div>
      <div class="tree-row lv3 d-flex align-items-center"><button aria-label="Expand"><svg width="17" height="22"><use href="#tri-closed"/></svg></button><div class="chip d-flex align-items-center"><svg class="eye" width="24" height="24"><use href="#eye"/></svg><div class="hatch is-selected d-flex align-items-center"><svg class="node" width="24" height="24" viewBox="0 0 24 24"><path d="M1 5L5 1H23V18L19 23H1Z" fill="#f6f6fa" stroke="#444a55" stroke-width="1.800"/><path d="M18 6L22 2V18L18 22Z" fill="#d4d4dc"/></svg>Don't Lie Cover:1</div><svg width="20" height="20" viewBox="0 0 20 20"><circle cx="10" cy="10" r="9" fill="#fff" stroke="#333" stroke-width="1.500"/><circle cx="10" cy="10" r="4" fill="#333"/></svg></div></div>
    </div>
  </section>

  <svg class="float view-cube" width="90" height="100" viewBox="1804 230 90 100" role="img" aria-label="View cube">
    <defs><filter id="soft" x="-50%" y="-50%" width="200%" height="200%"><feGaussianBlur stdDeviation="4"/></filter></defs>
    <path d="M1812 305L1864 322L1892 298L1870 285Z" fill="#bbb" filter="url(#soft)"/>
    <path d="M1818 257L1845 241L1887 250L1864 269Z" fill="#f1f1f1"/><path d="M1818 257L1864 269V315L1821 302Z" fill="#e8e8e8"/><path d="M1864 269L1887 250L1884 293L1864 315Z" fill="#dadada"/>
    <path d="M1818 257L1845 241L1887 250L1864 269ZM1864 269V315L1884 293L1887 250M1821 302L1864 315" fill="none" stroke="#999" stroke-width="1.500" stroke-dasharray="6 4"/>
    <path d="M1817 250L1821 302" stroke="#7676ff" stroke-width="2.500"/><path d="M1821 302L1872 320" stroke="#f28080" stroke-width="2.500"/>
    <g font-weight="700" font-family="Liberation Sans"><text x="1810" y="247" font-size="14" fill="#9f9fff">Z</text><text x="1873" y="328" font-size="14" fill="#ff9090">X</text></g>
    <text x="1825" y="286" font-size="10" font-family="Liberation Sans" fill="#80868e" transform="rotate(15 1825 286)">FRONT</text>
    <text x="1844" y="254" font-size="8" font-family="Liberation Sans" fill="#999" transform="rotate(12 1844 254)">TOP</text>
    <path d="M1869 292v-5M1875 281l5-6M1876 275l4 5" stroke="#888" stroke-width="2"/>
  </svg>

  <div class="float snap ui-face">Snap To : -0.3</div>
  <div class="float mini d-flex align-items-center">
    <span class="grip"></span><input type="text" value="-1.00 in" aria-label="Distance on canvas">
    <button aria-label="More"><svg width="4" height="20" viewBox="0 0 4 20" fill="#777"><circle cx="2" cy="2" r="2"/><circle cx="2" cy="10" r="2"/><circle cx="2" cy="18" r="2"/></svg></button>
  </div>

  <form class="float extrude">
    <header class="d-flex align-items-center">
      <svg width="6" height="16" viewBox="0 0 6 16"><path d="M1 3V13M5 0V16" stroke="#777" stroke-width="1.500"/></svg>
      <svg width="14" height="14" class="minus"><use href="#minus-dot"/></svg>
      <span class="flex-grow-1">EXTRUDE</span>
      <svg width="16" height="10" viewBox="0 0 16 10" fill="#333"><path d="M0 0V10L8 5ZM8 0V10L16 5Z"/></svg>
    </header>
    <div class="field-row d-flex align-items-center"><span class="field-name">Type</span>
      <button type="button" class="on-btn type-btn d-flex align-items-center justify-content-center" aria-label="Extrude"><svg width="24" height="24" viewBox="0 0 24 24"><path d="M0 5L4 1H18V14L14 19H0Z" fill="#90cdfb"/><path d="M0 5L4 1H18L14 5Z" fill="#bce2ff"/><path d="M0 22.500H14L19 17" fill="none" stroke="#ddd" stroke-width="2"/><path d="M22 20V3" stroke="#fff" stroke-width="1.500"/><path d="M20 6L22 1L24 6Z" fill="#fff"/></svg></button>
      <button type="button" aria-label="Thin extrude"><svg width="24" height="24" viewBox="0 0 24 24"><path d="M0 5L4 1H18V15L14 19L10 15H6L0 20Z" fill="#4794cd"/><path d="M5 5L8 2H12L10 15H6Z" fill="#9bd1f7"/><path d="M0 23L6 18L10 22H13L19 17" fill="none" stroke="#aaa" stroke-width="2"/><path d="M22 20V3" stroke="#333" stroke-width="1.500"/><path d="M20 6L22 1L24 6Z" fill="#333"/></svg></button>
    </div>
    <div class="field-row d-flex align-items-center"><span class="field-name">Profiles</span>
      <button type="button" class="on-btn sel-btn d-flex align-items-center"><svg width="16" height="24" viewBox="0 0 16 24"><path d="M1 1V18L5 14L9 22L12 21L9 13H15Z" fill="#eee" stroke="#555" stroke-width="1.500"/></svg>1 selected</button>
      <button type="button" class="clear-btn" aria-label="Clear"><svg width="14" height="14" viewBox="0 0 14 14"><path d="M1 1L13 13M13 1L1 13" stroke="currentColor" stroke-width="3"/></svg></button>
    </div>
    <div class="field-row d-flex align-items-center"><label for="start">Start</label><div class="pick"><select id="start"><option>Profile Plane</option></select><svg width="24" height="24" viewBox="0 0 24 24"><path d="M6 1V23" stroke="#1b2e5c" stroke-width="3"/><path d="M7 12H17" stroke="#333" stroke-width="2"/><path d="M14 8L19 12L14 16Z" fill="#333"/></svg></div></div>
    <div class="field-row d-flex align-items-center"><label for="dir">Direction</label><div class="pick"><select id="dir"><option>One Side</option></select><svg width="24" height="24" viewBox="0 0 24 24"><path d="M8 1L23 6V18L8 14Z" fill="#f4b183" stroke="#d99465"/><path d="M15 9L2 22M1 17V23H7" stroke="#555" stroke-width="2" fill="none"/></svg></div></div>
    <div class="field-row d-flex align-items-center"><label for="ext">Extent Type</label><div class="pick"><select id="ext"><option>Distance</option></select><svg width="24" height="24" viewBox="0 0 24 24"><path d="M2 1V23M22 1V23" stroke="#1b2e5c" stroke-width="3"/><path d="M5 12H19" stroke="#333" stroke-width="2"/><path d="M9 8L4 12L9 16ZM15 8L20 12L15 16Z" fill="#333"/></svg></div></div>
    <div class="field-row d-flex align-items-center"><label for="dist">Distance</label><input id="dist" class="form-control" type="text" value="-1.00 in"></div>
    <div class="field-row d-flex align-items-center"><label for="taper">Taper Angle</label><input id="taper" class="form-control" type="text" value="0.0 deg"></div>
    <div class="rule"></div>
    <div class="field-row d-flex align-items-center"><label for="op">Operation</label><div class="pick"><select id="op"><option>Cut</option></select><svg width="24" height="24" viewBox="0 0 24 24"><path d="M2 10H6V17H17V10H22V22H2Z" fill="#62abe5" stroke="#4691cb"/><path d="M7 2H17V16H7Z" fill="#ecb1b1"/></svg></div></div>
    <div class="field-row objects-row d-flex align-items-center"><svg width="9" height="13" viewBox="0 0 9 13"><path d="M0 0V13L9 6.500Z" fill="#333"/></svg>Objects To Cut</div>
    <footer class="d-flex align-items-center">
      <svg width="19" height="19" viewBox="0 0 19 19"><circle cx="9.500" cy="9.500" r="9.500" fill="#111"/><path d="M8 3h3v3H8zM7 8h4v6h2v2H6v-2h2v-4H7z" fill="#fff"/></svg>
      <button type="button" class="dlg-btn ms-auto" style="margin-right:15px">OK</button><button type="button" class="dlg-btn">Cancel</button>
    </footer>
  </form>

  <div class="float status">1 Profile | Area : 9.00 in^2</div>

  <section class="float palette-head comments d-flex align-items-center">
    <span class="flex-grow-1">COMMENTS</span>
    <svg width="14" height="14" class="me-2" viewBox="0 0 14 14"><circle cx="7" cy="7" r="7" fill="#333"/><path d="M3 7H11M7 3V11" stroke="#eee" stroke-width="1.600"/></svg>
    <svg width="8" height="16" viewBox="0 0 8 16"><path d="M2 0V16M6 3V13" stroke="#777" stroke-width="1.500"/></svg>
  </section>

  <div class="float navbar-strip d-flex align-items-center" role="toolbar">
    <button class="wide" aria-label="Orbit"><svg width="24" height="24" viewBox="0 0 24 24"><ellipse cx="12" cy="13" rx="11" ry="4" fill="none" stroke="#444" stroke-width="2"/><path d="M11 23V6H8L12 1L16 6H14V23Z" fill="#fff" stroke="#555"/><path d="M4 17H14" stroke="#222" stroke-width="2"/><path d="M2 17L8 13V21Z" fill="#222"/></svg><i class="caret"></i></button>
    <button aria-label="Look at"><svg width="24" height="24" viewBox="0 0 24 24"><path d="M1 9H23V23H1Z" fill="#f4f4f8" stroke="#555a66" stroke-width="2"/><path d="M2 8V4L8 5L10 1L12 5L20 2L17 8Z" fill="#ccc" stroke="#555a66"/><path d="M6 13H18V18H6Z" fill="#b9bcc6" stroke="#555a66" stroke-width="1.500"/></svg></button>
    <button aria-label="Pan"><svg width="24" height="24" viewBox="0 0 24 24"><path d="M7 23Q5 17 1 14Q1 11 5 13L7 15L4 5Q5 3 7 5L10 11V2Q11 0 13 2L14 10L16 2Q18 1 19 3L18 12L21 7Q24 6 23 9L19 18L17 23Z" fill="#fafafa" stroke="#555" stroke-width="1.500"/></svg></button>
    <button aria-label="Zoom"><svg width="26" height="24" viewBox="0 0 26 24"><circle cx="7" cy="10" r="6" fill="#e1f1f3" stroke="#667" stroke-width="1.800"/><path d="M12 15L19 22" stroke="#444a55" stroke-width="4"/><path d="M17 5H24M20.500 1V9M17 11H24" stroke="#334" stroke-width="1.800"/></svg></button>
    <button class="wide" aria-label="Fit"><svg width="25" height="24" viewBox="0 0 25 24"><path d="M1 1H24V23H1Z" fill="none" stroke="#555" stroke-width="1.500" stroke-dasharray="4 3"/><circle cx="11" cy="10" r="9.500" fill="#e1f3ef" stroke="#667" stroke-width="2"/><path d="M17 16L24 23" stroke="#444" stroke-width="4"/></svg><i class="caret"></i></button>
    <button aria-label="Display settings"><svg width="24" height="24" viewBox="0 0 24 24"><path d="M1 1H23V18H1Z" fill="#eee" stroke="#667" stroke-width="2"/><path d="M4 4H20V15H4Z" fill="#9cbde8" stroke="#456b9f"/><path d="M9 19H15L18 23H6Z" fill="#fff" stroke="#667"/></svg><i class="caret"></i></button>
    <button aria-label="Grid"><svg width="25" height="24" viewBox="0 0 25 24"><path d="M1 1H24V23H1Z" fill="#eef" stroke="#556" stroke-width="2"/><path d="M6 1V23M10.500 1V23M15 1V23M19.500 1V23M1 5.500H24M1 10H24M1 14.500H24M1 19H24" stroke="#667" stroke-width="1.200"/></svg><i class="caret"></i></button>
    <button aria-label="Viewports"><svg width="24" height="20" viewBox="0 0 24 20" fill="#a9c5ea" stroke="#46638f" stroke-width="1.500"><path d="M1 1h10v8H1zM13 1h10v8H13zM1 11h10v8H1zM13 11h10v8H13z"/><path d="M4 4h4v2H4zM16 4h4v2h-4zM4 14h4v2H4zM16 14h4v2h-4z" stroke-width=".7"/></svg><i class="caret"></i></button>
  </div>
</main>

<section class="timeline d-flex flex-shrink-0" aria-label="Timeline">
  <div class="playback d-flex align-items-center">
    <button aria-label="To start"><svg width="23" height="24" viewBox="0 0 22 24"><use href="#skip-end" transform="matrix(-1 0 0 1 22 0)" width="22" height="24"/></svg></button>
    <button aria-label="Step back"><svg width="23" height="24" viewBox="0 0 22 24"><use href="#play-step" transform="matrix(-1 0 0 1 22 0)" width="22" height="24"/></svg></button>
    <button aria-label="Play"><svg width="23" height="24" viewBox="0 0 22 24"><path d="M2 0L20 12L2 24Z" fill="currentColor"/></svg></button>
    <button aria-label="Step forward"><svg width="23" height="24"><use href="#play-step"/></svg></button>
    <button aria-label="To end"><svg width="23" height="24"><use href="#skip-end"/></svg></button>
  </div>
  <div class="features">
    <div class="d-flex">
      <button aria-label="Sketch 1"><svg width="24" height="24"><use href="#sketch-s"/></svg></button>
      <button aria-label="Extrude 1"><svg width="24" height="24"><use href="#extrude-s"/></svg></button>
      <button aria-label="Sketch 2"><svg width="24" height="24"><use href="#sketch-s"/></svg></button>
      <button aria-label="Extrude 2"><svg width="24" height="24"><use href="#extrude-s"/></svg></button>
      <button class="is-on" aria-label="Sketch 3"><svg width="24" height="24"><use href="#sketch-s"/></svg></button>
    </div>
    <svg width="180" height="10" viewBox="0 0 180 10"><path d="M7 7.500H163V0M19 0V7M55 0V7M91 0V7M127 0V7" fill="none" stroke="#ccc" stroke-width="3"/></svg>
    <svg class="marker" width="20" height="48" viewBox="0 0 20 48"><path d="M1 0H19V6L11 14V48H8V14L1 6Z" fill="#666"/></svg>
  </div>
  <button class="gear-btn ms-auto" aria-label="Timeline settings"><svg width="24" height="24"><use href="#gear"/></svg></button>
</section>

<footer class="taskbar ui-face d-flex align-items-center flex-shrink-0">
  <button class="start d-flex justify-content-center" aria-label="Start"><svg width="24" height="24" viewBox="0 0 24 24" fill="#fff"><path d="M0 3.500L10 2V11.500H0ZM11 1.800L24 0V11.500H11ZM0 12.500H10V22L0 20.500ZM11 12.500H24V24L11 22.200Z"/></svg></button>
  <div class="search d-flex align-items-center"><svg width="26" height="26" viewBox="0 0 26 26" fill="none" stroke="#111" stroke-width="2"><circle cx="16.500" cy="9" r="8"/><path d="M11 15L1 25"/></svg><input type="text" placeholder="Type here to search" aria-label="Search"></div>
  <div class="apps d-flex">
    <button class="task-view" aria-label="Task view"><svg width="24" height="24" viewBox="0 0 24 24" fill="none" stroke="#fff" stroke-width="1.500"><path d="M1 6H16V18H1ZM1 0V3H16V0M1 24V21H16V24M22.500 0V6M22.500 12V24"/><path d="M21 7h3v3h-3z" fill="#fff" stroke="none"/></svg></button>
    <button class="running many" aria-label="Chrome"><svg width="40" height="40" viewBox="0 0 40 40"><use href="#chrome"/><circle cx="27" cy="28" r="12" fill="#2c4a7e"/><path d="M15 28L20 30L27 28L39 30Q37 40 27 40Q16 39 15 28Z" fill="#b9c6d0"/></svg></button>
    <button class="running" aria-label="Spotify"><svg width="34" height="34" viewBox="0 0 34 34"><circle cx="17" cy="17" r="17" fill="#1ed760"/><path d="M6 11Q18 7 29 13M7 17Q18 14 27 19M8 23Q17 20 25 24.500" fill="none" stroke="#1b1f23" stroke-width="3" stroke-linecap="round"/></svg></button>
    <button class="running is-front" aria-label="Fusion 360"><svg width="34" height="36" viewBox="0 0 34 36"><path d="M5 0H32V5L34 8V36H3V27H0V4Z" fill="#ff6b00"/><path d="M0 4L5 0V25L0 28Z" fill="#ff9a55"/><path d="M3 26H34V36H3Z" fill="#8f3500"/><text x="13" y="20" font-family="Liberation Sans" font-size="18" font-weight="700" fill="#fff">F</text><text x="11" y="34" font-family="Liberation Sans" font-size="8" font-weight="700" fill="#fff">360</text></svg></button>
    <button class="running" aria-label="Chrome profile 2"><svg width="40" height="40" viewBox="0 0 40 40"><use href="#chrome"/><circle cx="27" cy="28" r="12" fill="#85705a"/><path d="M27 16L31 28H23Z" fill="#4d2c1a"/><circle cx="22" cy="25" r="2.500" fill="#1c1512"/><circle cx="32" cy="25" r="2.500" fill="#1c1512"/><ellipse cx="23" cy="33" rx="4" ry="5" fill="#b19c82"/><ellipse cx="31" cy="33" rx="4" ry="5" fill="#b19c82"/></svg></button>
    <button class="running many" aria-label="File Explorer"><svg width="32" height="28" viewBox="0 0 32 28"><path d="M0 0H12L15 3H32V26H0Z" fill="#fdd264"/><path d="M0 0H12L15 3L12 5H0Z" fill="#e09f09"/><path d="M5 15H27V28H21V21H11V28H5Z" fill="#3892dc"/></svg></button>
    <button class="running many" aria-label="Photos"><svg width="32" height="32" viewBox="0 0 32 32"><path d="M0 0H32V32H0Z" fill="#1fabea"/><path d="M14 20L22 13L32 23V32H14Z" fill="#7a86e0"/><path d="M0 19L10 10L32 32H0Z" fill="#154a91"/><circle cx="21" cy="8" r="3" fill="#e8f6ff"/></svg></button>
  </div>
  <div class="d-flex align-items-center ms-auto">
    <button class="weather d-flex align-items-center"><svg width="34" height="34" viewBox="0 0 34 34"><defs><linearGradient id="mo" x2="0" y2="1"><stop stop-color="#fbc63e"/><stop offset="1" stop-color="#f3791f"/></linearGradient></defs><path d="M21 0Q33 5 33 17Q32 33 16 34Q4 34 0 22Q22 26 21 0Z" fill="url(#mo)"/></svg><span>53°F</span><span>Clear</span></button>
    <div class="tray d-flex align-items-center">
      <svg width="20" height="12" viewBox="0 0 20 12"><path d="M1 11L10 2L19 11" fill="none" stroke="#fff" stroke-width="1.500"/></svg>
      <svg width="17" height="22" viewBox="0 0 17 22" fill="none" stroke="#fff" stroke-width="1.300"><path d="M1 6H11V16H1ZM11 9L16 7V15L11 13M2 2Q8-1 14 2M2 20Q8 23 14 20"/></svg>
      <svg width="25" height="18" viewBox="0 0 25 18"><path d="M7 4.500H22V16.500H7ZM24 8v5" stroke="#fff" fill="none" stroke-width="1.300"/><path d="M9 6H20V15H9Z" fill="#fff"/><path d="M1 3H7V7Q4 10 1 7ZM2 0v3M6 0v3M4 8V17H7" stroke="#fff" fill="#1f2228" stroke-width="1.300"/></svg>
      <svg width="26" height="22" viewBox="0 0 26 22"><path d="M2 15Q-1 8 6 7Q9-1 17 3L21 9L9 17Z" fill="#999"/><path d="M2 15Q1 8 9 8L15 16H4Z" fill="#eee"/><circle cx="18" cy="14" r="7.500" fill="#ffe600"/><path d="M18 9V15M18 17v2" stroke="#111" stroke-width="2"/></svg>
      <svg width="22" height="22" viewBox="0 0 22 22" fill="none" stroke="#fff" stroke-width="1.400"><path d="M8 20L7 16L17 1Q20 0 19 4L10 18ZM8 11Q1 13 1 18Q4 22 8 17M17 11Q21 10 21 13Q17 13 14 19"/></svg>
      <span>ENG</span>
    </div>
    <div class="clock text-center">9:06 PM<br>4/9/2023</div>
    <button class="action" aria-label="Action center"><svg width="26" height="26" viewBox="0 0 26 26"><path d="M0 0H24V19H14L8 25V19H0Z" fill="#fff"/><path d="M5 6H19M5 10H19M5 14H14" stroke="#222" stroke-width="1.500"/><path d="M20 12Q27 16 24 21Q20 26 14 23Q21 21 20 12Z" fill="#1f2228" stroke="#fff"/></svg></button>
    <div class="peek"></div>
  </div>
</footer>
<script src="https://cdn.jsdelivr.net/npm/bootstrap@5.3.0/dist/js/bootstrap.bundle.min.js"></script>
</body>
</html>
